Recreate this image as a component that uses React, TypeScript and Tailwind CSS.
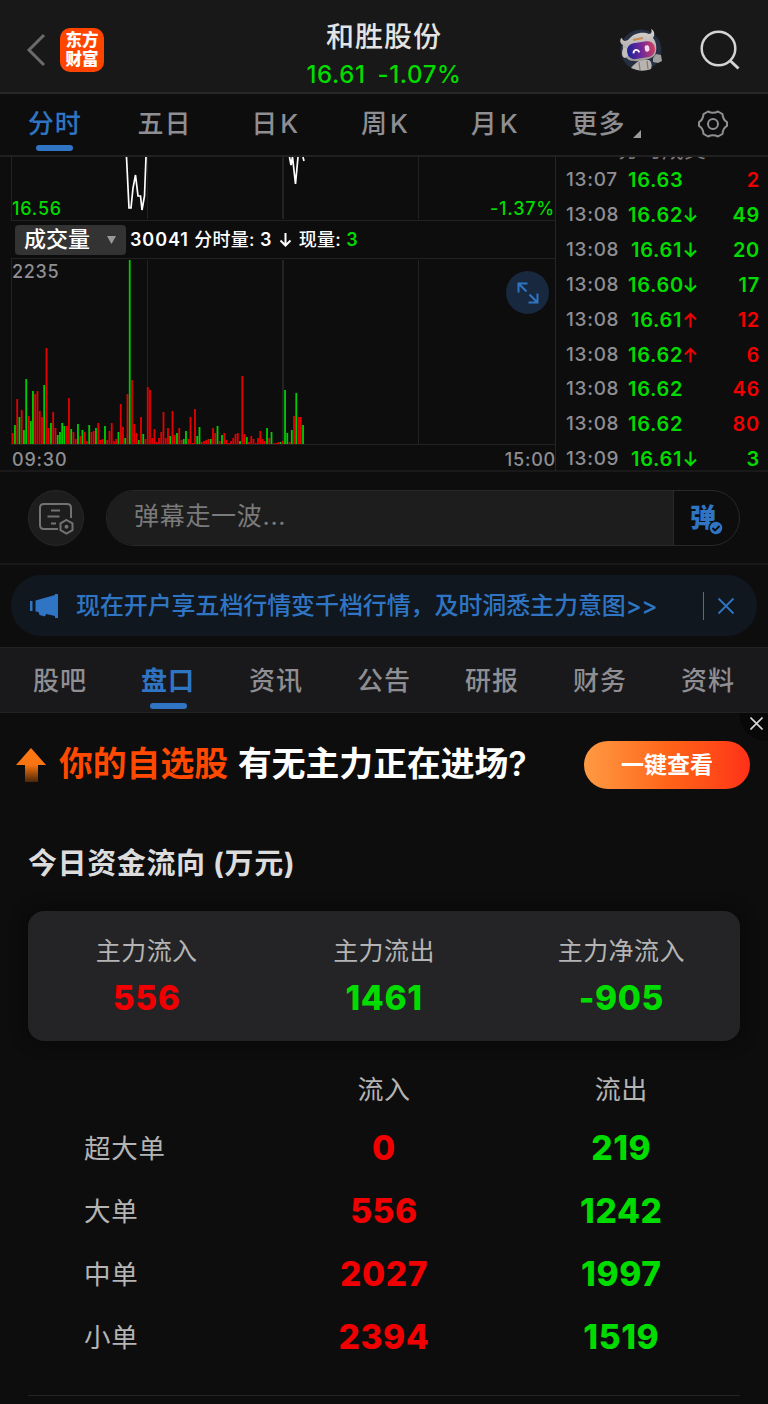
import type { ReactNode } from "react";
import clsx from "clsx";

const PERIODS = ["分时", "五日", "日K", "周K", "月K"];

const SECTIONS = ["股吧", "盘口", "资讯", "公告", "研报", "财务", "资料"];

interface Trade {
  time: string;
  price: string;
  arrow?: "up" | "down";
  volume: number;
  buy?: boolean;
}

const TRADES: Trade[] = [
  { time: "13:07", price: "16.63", volume: 2, buy: true },
  { time: "13:08", price: "16.62", arrow: "down", volume: 49 },
  { time: "13:08", price: "16.61", arrow: "down", volume: 20 },
  { time: "13:08", price: "16.60", arrow: "down", volume: 17 },
  { time: "13:08", price: "16.61", arrow: "up", volume: 12, buy: true },
  { time: "13:08", price: "16.62", arrow: "up", volume: 6, buy: true },
  { time: "13:08", price: "16.62", volume: 46, buy: true },
  { time: "13:08", price: "16.62", volume: 80, buy: true },
  { time: "13:09", price: "16.61", arrow: "down", volume: 3 },
];

const SUMMARY = [
  { label: "主力流入", value: "556", up: true },
  { label: "主力流出", value: "1461", up: false },
  { label: "主力净流入", value: "-905", up: false },
];

const FLOWS = [
  { label: "超大单", inflow: 0, outflow: 219 },
  { label: "大单", inflow: 556, outflow: 1242 },
  { label: "中单", inflow: 2027, outflow: 1997 },
  { label: "小单", inflow: 2394, outflow: 1519 },
];

// One entry per minute, negative means a falling (green) minute
const VOLUMES = [
  11, -19, 45, -27, 34, -14, -65, 28, -23, -53, 50, 53, 33, 27, -59, 96, 16,
  -21, 32, 16, -9, -12, -21, -18, 18, 46, -15, 12, 5, -20, 8, -14, 12, 3, -19,
  12, 13, -16, 21, 4, 5, -18, 4, 13, 21, 3, 5, -12, 40, 17, -6, 50, -184, 64,
  20, 11, -4, 27, -10, 5, 57, 54, 6, 15, 2, 6, 12, 32, 6, 16, -8, 33, 9, -11,
  16, 4, -5, -13, 5, 27, 1, 35, -8, -17, 2, 3, 4, 5, -5, 16, 11, -18, 3, -9,
  11, 4, 1, 3, 6, 10, 11, -3, 68, 10, -7, 2, 8, 5, 1, 6, 13, 5, 3, -16, 6,
  -12, 1, 1, 2, -2, 3, -54, -11, 2, -14, 28, -51, 27, 27, -19,
];

function Header() {
  return (
    <header className="flex h-[94px] items-center border-b-2 border-[#272727] bg-[#181818]">
      <div className="flex w-[250px] items-center pt-2 pl-[26px]">
        <svg width="20" height="34" viewBox="0 0 20 34" fill="none">
          <path d="M18 2 3 17l15 15" stroke="#6b6b6b" strokeWidth="3" />
        </svg>
        <div className="ml-[14px] flex h-11 w-11 flex-col items-center justify-center rounded-[10px] bg-[#ff4400] text-[16.5px] leading-[19px] font-black text-white">
          <span>东方</span>
          <span>财富</span>
        </div>
      </div>
      <div className="flex flex-1 flex-col items-center pt-5">
        <h1 className="text-[28px] leading-[36px] font-medium tracking-[1px] text-[#e4e4e4]">
          和胜股份
        </h1>
        <div className="mt-[2px] flex gap-[12px] text-[24px] leading-[36px] font-medium tracking-[0.6px] text-[#00db00]">
          <span>16.61</span>
          <span>-1.07%</span>
        </div>
      </div>
      <div className="flex w-[250px] items-center justify-end gap-[37px] pt-2 pr-[28px]">
        <Robot />
        <svg width="40" height="40" viewBox="0 0 40 40" fill="none">
          <g stroke="#d4d4d4" strokeWidth="2.500">
            <circle cx="18.500" cy="18.500" r="16.800" />
            <path d="m30 30.500 8.500 8" strokeWidth="3" />
          </g>
        </svg>
      </div>
    </header>
  );
}

function Robot() {
  return (
    <svg width="44" height="44" viewBox="0 0 44 44">
      <defs>
        <linearGradient id="visor" x1="0" y1="0" x2="1" y2="0">
          <stop offset="0" stopColor="#1c2098" />
          <stop offset="0.5" stopColor="#70289a" />
          <stop offset="1" stopColor="#d23c62" />
        </linearGradient>
        <linearGradient id="shell" x1="0" y1="0" x2="0" y2="1">
          <stop offset="0" stopColor="#d8d4d2" />
          <stop offset="1" stopColor="#9c9896" />
        </linearGradient>
      </defs>
      <circle cx="22" cy="22" r="20.500" fill="#262e42" />
      <path
        d="M12 40c2-3 6-6 9-8l9 0c3 2 3 6 2 9-5 2-10 2-14 1Z"
        fill="#b8b4b1"
      />
      <path d="m20 34 1 8m7-9 1 8" stroke="#8a7468" strokeWidth="1.200" />
      <path d="m34 30 3-4 5 1 1 6-4 2-5-1Z" fill="#a09d9d" />
      <path
        d="M4 17C0 15 1 10 3 10c1 4 4 3 6 2C14 5 24 3 30 6c3 0 3-3 2-5 4 2 4 6 2 9 4 4 4 13 2 17-4 5-19 8-26 5-5-3-7-10-6-15Z"
        fill="url(#shell)"
      />
      <ellipse cx="6" cy="25" rx="3" ry="5" fill="#c4c0bf" />
      <g transform="rotate(-9 23 22)">
        <rect x="8" y="14" width="28" height="16" rx="7.500" fill="url(#visor)" />
        <path
          d="M14 24c1-4 5-4 6 0"
          fill="none"
          stroke="#fff"
          strokeWidth="1.800"
        />
        <rect x="26" y="18" width="4.500" height="6.500" rx="2" fill="#f4dcea" />
      </g>
      <path d="m14 12 10-2" stroke="#cc8a52" strokeWidth="2.200" />
    </svg>
  );
}

function PeriodTabs() {
  return (
    <nav className="grid h-[63px] grid-cols-7 border-b-2 border-[#202020] text-[26px] leading-[36px] font-medium tracking-[1px] text-[#8e8e93]">
      {PERIODS.map((name, i) => (
        <div key={name} className="flex flex-col items-center pt-3">
          <span
            className={clsx(
              i === 0 && "text-[#2f75c4]",
              i > 1 && "pl-1 tracking-[3px]"
            )}
          >
            {name}
          </span>
          {i === 0 && (
            <span className="mt-[3px] h-[6px] w-[37px] rounded-full bg-[#2f75c4]" />
          )}
        </div>
      ))}
      <div className="flex items-start justify-center pt-3 pl-[6px]">
        <span>更多</span>
        <svg width="8" height="8" viewBox="0 0 8 8" className="mt-6 ml-2">
          <path d="M8 0v8H0Z" fill="#9a9a9f" />
        </svg>
      </div>
      <div className="flex items-start justify-center pt-[14px]">
        <svg
          width="32"
          height="32"
          viewBox="0 0 32 32"
          fill="none"
          stroke="#8e8e93"
          strokeWidth="2"
          strokeLinejoin="round"
        >
          <path d="M11 3.500q5 2.600 10 0l4.500 2.600q.4 5.600 4.500 8v3.800q-4.100 2.400-4.500 8L21 28.500q-5-2.600-10 0l-4.500-2.600q-.4-5.600-4.500-8v-3.800q4.100-2.400 4.500-8Z" />
          <circle cx="16" cy="16" r="5" />
        </svg>
      </div>
    </nav>
  );
}

function PriceChart() {
  return (
    <div className="relative flex h-[64px] items-end justify-between pl-[12px] text-[18px] leading-6 font-medium tracking-[0.8px] text-[#00db00]">
      <svg
        width="556"
        height="64"
        viewBox="0 0 556 64"
        fill="none"
        className="absolute top-0 left-0"
      >
        <g stroke="#222" strokeWidth="1">
          <path d="M11.500 0v64M147.500 0v62M418.500 0v62M11 63.500h544" />
          <path d="M283 0v62" strokeWidth="2" />
        </g>
        <path
          d="m126.500 0 2.500 51h2l2-20 2.500-13 2.500 21h2.500l1.500 14 2.500-14L146 0M289.500 0l1.500 8 1.500-8 3 27L298 0m5 0 1 4"
          stroke="#fff"
          strokeWidth="1.700"
        />
      </svg>
      <span>16.56</span>
      <span>-1.37%</span>
    </div>
  );
}

function VolumeChart() {
  return (
    <div className="relative h-[187px] pt-[2px] pl-[12px] text-[18px] leading-6 font-medium tracking-[0.7px] text-[#8e8e93]">
      <svg
        width="556"
        height="187"
        viewBox="0 0 556 187"
        className="absolute top-0 left-0"
      >
        <g stroke="#222" strokeWidth="1">
          <path d="M11.500 0v187M147.500 2v184M418.500 2v184M11 .5h544M11 186.500h544" />
          <path d="M283 2v184" strokeWidth="2" />
        </g>
        {VOLUMES.map((v, i) => (
          <rect
            key={i}
            x={11.8 + i * 2.2506}
            y={186 - Math.abs(v)}
            width="1.800"
            height={Math.abs(v)}
            fill={v > 0 ? "#e60000" : "#00cd00"}
          />
        ))}
      </svg>
      <span className="relative">2235</span>
      <button className="absolute top-[13px] right-[6px] flex h-[43px] w-[43px] items-center justify-center rounded-full bg-[#18293f]">
        <svg
          width="22"
          height="22"
          viewBox="0 0 22 22"
          fill="none"
          stroke="#2f75c4"
          strokeWidth="2"
        >
          <path d="M1.500 10.500v-9h9M1.500 1.500l8 8M20.500 11.500v9h-9M20.500 20.500l-8-8" />
        </svg>
      </button>
    </div>
  );
}

function Arrow({ dir }: { dir: "up" | "down" }) {
  return (
    <svg
      width="13"
      height="16"
      viewBox="0 0 13 16"
      fill="none"
      stroke={dir === "up" ? "#f00000" : "#00db00"}
      strokeWidth="2.200"
      className={clsx(dir === "up" && "rotate-180")}
    >
      <path d="M6.500 .5V14M1 8.500l5.500 5.500L12 8.500" />
    </svg>
  );
}

function TradeList() {
  return (
    <div className="flex h-[314px] flex-1 flex-col border-l border-[#262626] text-[19px] font-medium tracking-[0.7px]">
      {/* Title row, scrolled almost out of view */}
      <div className="mb-[3px] flex h-[3px] shrink-0 items-end justify-center overflow-hidden text-[22px] leading-[22px] font-normal tracking-normal text-[#77777b]">
        分时成交
      </div>
      {TRADES.map((t, i) => (
        <div
          key={i}
          className="flex h-[34.850px] shrink-0 items-center pr-2 pl-[10px] leading-[28px]"
        >
          <span className="w-[62px] text-[#8e8e93]">{t.time}</span>
          <span
            className={clsx(
              "w-[56px] text-[20px] font-semibold text-[#00db00]",
              t.arrow && t.price === "16.61" && "pl-[3px]"
            )}
          >
            {t.price}
          </span>
          {t.arrow && <Arrow dir={t.arrow} />}
          <span
            className={clsx(
              "ml-auto text-[20px] font-semibold",
              t.buy ? "text-[#f00000]" : "text-[#00db00]"
            )}
          >
            {t.volume}
          </span>
        </div>
      ))}
    </div>
  );
}

function Charts() {
  return (
    <section className="flex h-[315px] border-b-2 border-[#191919]">
      <div className="w-[555px] shrink-0">
        <PriceChart />
        <div className="flex h-[37px] items-center pl-[15px] text-[18px] font-medium text-white">
          <div className="flex h-[30px] w-[111px] items-center justify-between rounded bg-[#333] pr-[10px] pl-[9px] text-[22px]">
            <span>成交量</span>
            <svg width="9" height="8" viewBox="0 0 9 8">
              <path d="M0 0h9L4.500 8Z" fill="#999" />
            </svg>
          </div>
          <span className="ml-1 tracking-[0.3px] whitespace-pre">
            <span className="font-semibold tracking-[0.9px]">30041 </span>
            分时量: <span className="font-semibold">3</span>
          </span>
          <svg
            width="13"
            height="14"
            viewBox="0 0 13 14"
            fill="none"
            stroke="#fff"
            strokeWidth="2"
            className="mx-[7px]"
          >
            <path d="M6.500 0v12.500M1.500 7.500l5 5 5-5" />
          </svg>
          <span className="tracking-[0.3px] whitespace-pre">
            现量:{" "}
            <span className="font-semibold text-[#00db00]">3</span>
          </span>
        </div>
        <VolumeChart />
        <div className="flex justify-between pt-[3px] pl-[12px] text-[18px] leading-6 font-medium tracking-[0.8px] text-[#8e8e93]">
          <span>09:30</span>
          <span className="-mr-px">15:00</span>
        </div>
      </div>
      <TradeList />
    </section>
  );
}

function Danmu() {
  return (
    <section className="flex h-[93px] items-center border-b-2 border-[#191919] pr-7 pl-7">
      <button className="flex h-14 w-14 items-center justify-center rounded-full border border-[#282828] bg-[#1d1d1d]">
        <svg
          width="36"
          height="34"
          viewBox="0 0 36 34"
          fill="none"
          stroke="#727272"
          strokeWidth="2"
        >
          <path d="M20 28H6q-4 0-4-4V7q0-4 4-4h23q4 0 4 4v10M13 9.500h9M9.500 15.500h12M13 22.500h5" />
          <path d="m28.500 19 6 3.400v6.800l-6 3.400-6-3.400v-6.800Z" />
          <circle cx="28.500" cy="25.800" r="2" fill="#727272" stroke="none" />
        </svg>
      </button>
      <div className="ml-[22px] flex h-14 flex-1 overflow-hidden rounded-full border border-[#282828]">
        <div className="flex-1 bg-[#1d1d1d] pt-[7px] pl-[27px] text-[25px] leading-9 tracking-[0.7px] text-[#7a7a7a]">
          弹幕走一波...
        </div>
        <div className="relative w-[66px] border-l border-[#282828] pt-[9px] pl-[16px] text-[26px] leading-9 font-black text-[#2f75c4]">
          弹
          <svg
            width="16"
            height="16"
            viewBox="0 0 16 16"
            fill="none"
            className="absolute top-[29px] left-[34px]"
          >
            <circle
              cx="8"
              cy="8"
              r="7"
              fill="#2f75c4"
              stroke="#0d0d0d"
              strokeWidth="1.500"
            />
            <path d="m4.500 8 2.500 2.500L11.500 6" stroke="#0d0d0d" strokeWidth="1.800" />
          </svg>
        </div>
      </div>
    </section>
  );
}

function Notice() {
  return (
    <div className="mx-[11px] mt-[10px] flex h-[61px] items-center rounded-[30px] bg-[#10171f] pl-[18px] text-[#2f75c4]">
      <svg width="30" height="26" viewBox="0 0 30 26" fill="#2f75c4">
        <path d="M1 8h2.500v10H1ZM6.500 7.500 26 2V1h3v24h-3v-2l-9-2-1 2.500-5.500-1.500-1-3-3-.5Z" />
      </svg>
      <span className="ml-[17px] text-[24px] leading-9 font-medium tracking-[-0.1px] whitespace-nowrap">
        现在开户享五档行情变千档行情，及时洞悉主力意图&gt;&gt;
      </span>
      <span className="mr-[13px] ml-auto h-7 w-px bg-[#2f75c4]" />
      <svg
        width="18"
        height="18"
        viewBox="0 0 18 18"
        stroke="#2f75c4"
        strokeWidth="1.800"
        className="mr-[22px]"
      >
        <path d="m1.500 1.500 15 15m0-15-15 15" />
      </svg>
    </div>
  );
}

function SectionTabs() {
  return (
    <nav className="mt-[11px] grid h-[66px] grid-cols-7 border-y border-[#222224] bg-[#19191b] px-[6px] text-[26px] leading-9 font-medium tracking-[1px] text-[#8e8e93]">
      {SECTIONS.map((name, i) => (
        <div key={name} className="flex flex-col items-center pt-[15px]">
          <span className={clsx(i === 1 && "font-bold text-[#2f75c4]")}>
            {name}
          </span>
          {i === 1 && (
            <span className="mt-[4px] h-[6px] w-[37px] shrink-0 rounded-full bg-[#2f75c4]" />
          )}
        </div>
      ))}
    </nav>
  );
}

function Promo() {
  return (
    <section className="relative flex h-[103px] items-center pr-[18px] pl-[16px]">
      <svg width="30" height="34" viewBox="0 0 30 34">
        <defs>
          <linearGradient id="rise" x1="0" y1="0" x2="0" y2="1">
            <stop offset="0" stopColor="#ff7a14" />
            <stop offset="0.5" stopColor="#f87410" />
            <stop offset="1" stopColor="#4c2608" />
          </linearGradient>
        </defs>
        <path d="m15 0 15 17h-8v17H9V17H0Z" fill="url(#rise)" />
      </svg>
      <p className="ml-[13px] pb-[2px] text-[33.800px] leading-[48px] font-bold whitespace-nowrap text-white">
        <span className="mr-[10px] text-[#ff4800]">你的自选股</span>
        有无主力正在进场<span className="font-semibold">?</span>
      </p>
      <button className="ml-auto h-12 w-[166px] rounded-full bg-linear-to-r from-[#ff9a42] via-[#ff6418] to-[#ff2f18] pt-[2px] text-[23px] font-bold text-white">
        一键查看
      </button>
      <div className="absolute top-0 right-0 flex h-7 w-[29px] justify-end rounded-bl-[28px] bg-[#080808] pt-1 pr-[5px]">
        <svg
          width="13"
          height="13"
          viewBox="0 0 13 13"
          stroke="#d8d8d8"
          strokeWidth="1.600"
        >
          <path d="m.5.500 12 12m0-12-12 12" />
        </svg>
      </div>
    </section>
  );
}

function Amount({ up, children }: { up: boolean; children: ReactNode }) {
  return (
    <span
      className={clsx(
        "text-[33.500px] font-extrabold tracking-[0.600px]",
        up ? "text-[#f00000]" : "text-[#00db00]"
      )}
    >
      {children}
    </span>
  );
}

function MoneyFlow() {
  return (
    <section className="px-7">
      <h2 className="pt-[25px] text-[29px] leading-[46px] font-bold tracking-[0.600px] text-[#dcdcdc]">
        今日资金流向 (万元)
      </h2>
      <div className="mt-[24px] grid h-[130px] grid-cols-3 rounded-2xl bg-[#242426] pt-[21px] text-center shadow-[0_0_16px_#080808]">
        {SUMMARY.map((s) => (
          <div key={s.label} className="flex flex-col">
            <span className="text-[25px] leading-[38px] tracking-[0.400px] text-[#b4b4b4]">
              {s.label}
            </span>
            <span className="mt-[4px] leading-[48px]">
              <Amount up={s.up}>{s.value}</Amount>
            </span>
          </div>
        ))}
      </div>
      <div className="grid h-[76px] grid-cols-3 items-end pb-[8px] text-center text-[26px] leading-[38px] tracking-[0.500px] text-[#b4b4b4]">
        <span />
        <span>流入</span>
        <span>流出</span>
      </div>
      {FLOWS.map((row) => (
        <div
          key={row.label}
          className="grid h-[63px] grid-cols-3 items-center text-center"
        >
          <span className="pl-14 text-left text-[26.500px] tracking-[0.700px] text-[#b4b4b4]">
            {row.label}
          </span>
          <Amount up>{row.inflow}</Amount>
          <Amount up={false}>{row.outflow}</Amount>
        </div>
      ))}
      <div className="mt-[26px] h-px bg-[#232323]" />
    </section>
  );
}

export default function App() {
  return (
    <main className="h-[1404px] w-[768px] overflow-hidden bg-[#0d0d0d] font-[Inter,'Noto_Sans_CJK_SC',sans-serif]">
      <Header />
      <PeriodTabs />
      <Charts />
      <Danmu />
      <Notice />
      <SectionTabs />
      <Promo />
      <MoneyFlow />
    </main>
  );
}
